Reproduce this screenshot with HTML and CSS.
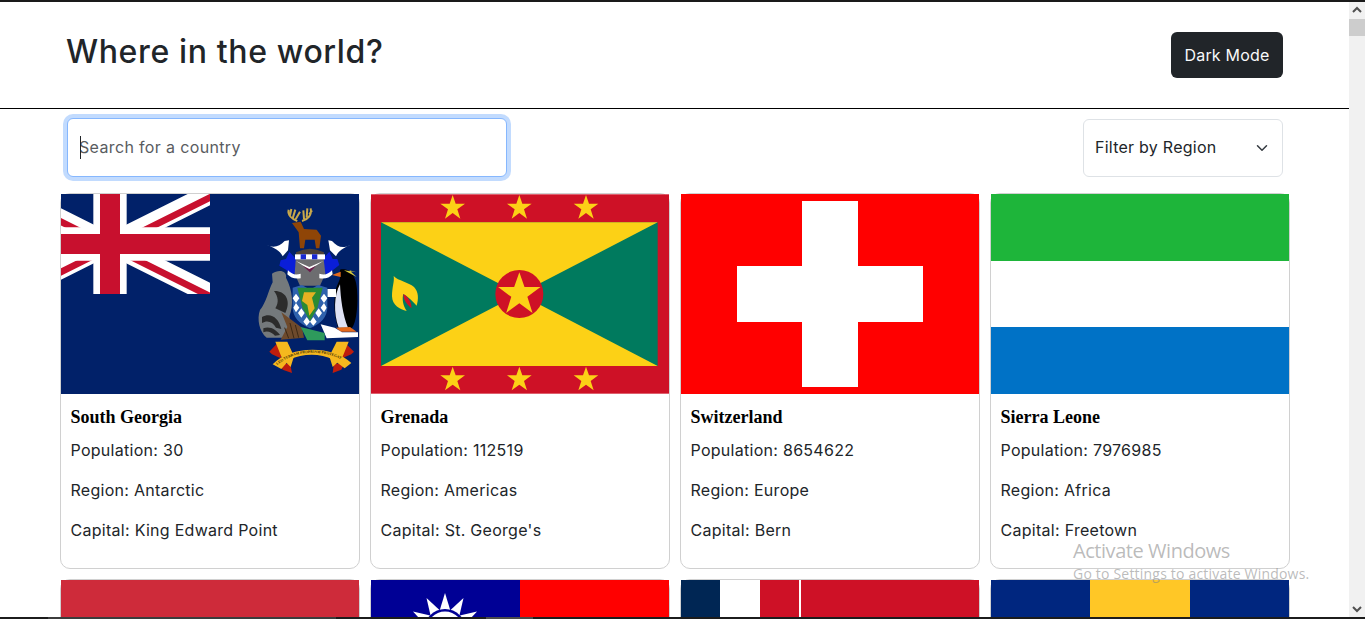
FILE: index.html
```html
<!DOCTYPE html>
<html lang="en">
<head>
    <meta charset="UTF-8">
    <meta name="viewport" content="width=device-width, initial-scale=1.0">
    <title>Where in the world?</title>
    <link rel="stylesheet" href="styles.css">
</head>
<body>
    <div class="top-edge"></div>
    <div class="window">
        <div class="page">
            <header class="header">
                <h1>Where in the world?</h1>
                <button type="button" class="mode-btn">Dark Mode</button>
            </header>

            <div class="controls">
                <div class="search">
                    <input type="text" class="search-input" placeholder="Search for a country">
                    <span class="caret"></span>
                </div>
                <div class="filter">
                    <select class="filter-select">
                        <option>Filter by Region</option>
                        <option>Africa</option>
                        <option>Americas</option>
                        <option>Asia</option>
                        <option>Europe</option>
                        <option>Oceania</option>
                    </select>
                    <svg class="chevron" viewBox="0 0 16 16" width="16" height="16"><path d="M2 5l6 6 6-6" fill="none" stroke="#343a40" stroke-width="2" stroke-linecap="round" stroke-linejoin="round" transform="translate(2 2) scale(.75)"/></svg>
                </div>
            </div>

            <div class="grid">
                <div class="card">
                    <!-- South Georgia -->
                    <svg class="flag" viewBox="0 0 298 200">
                        <defs>
                            <clipPath id="canton"><rect width="149" height="100"/></clipPath>
                        </defs>
                        <rect width="298" height="200" fill="#012169"/>
                        <g clip-path="url(#canton)">
                            <g transform="translate(-51 0) scale(3.3333)">
                                <path d="M0 0L60 30M60 0L0 30" stroke="#fff" stroke-width="6"/>
                                <path d="M0 0L30 15M60 30L30 15" stroke="#c8102e" stroke-width="2" transform="translate(0 .7)"/>
                                <path d="M60 0L30 15M0 30L30 15" stroke="#c8102e" stroke-width="2" transform="translate(.7 .7)"/>
                                <path d="M30 0V30M0 15H60" stroke="#fff" stroke-width="10"/>
                                <path d="M30 0V30M0 15H60" stroke="#c8102e" stroke-width="6"/>
                            </g>
                        </g>
                        <g transform="translate(149 1) scale(.33333)">
                            <!-- antlers and deer -->
                            <path d="M262 78C246 72 232 60 236 44M240 62L244 42M248 70L256 44M256 74L270 50M276 78C294 74 306 60 302 40M282 72L280 46M290 68L292 40M298 58L306 46" fill="none" stroke="#c9a84a" stroke-width="6"/>
                            <path d="M246 84L272 80L282 102L320 104L333 122L328 160L318 160L314 134L286 134L282 160L270 160L266 112Z" fill="#8f4507"/>
                            <path d="M258 172Q300 150 342 172V180H258Z" fill="#4e4238"/>
                            <!-- wings -->
                            <path d="M170 150C192 160 208 154 224 138L237 136L234 166L218 184C212 168 192 158 170 150Z" fill="#fff"/>
                            <path d="M422 150C398 162 382 156 366 138L355 136L360 166L378 184C384 168 402 158 422 150Z" fill="#fff"/>
                            <!-- mantling -->
                            <path d="M238 170L258 192L270 234L240 238L228 224L208 212L212 196L228 192Z" fill="#0a1ed8"/>
                            <path d="M358 170L338 192L328 234L358 238L370 224L388 210L382 192L368 192Z" fill="#0a1ed8"/>
                            <!-- helmet -->
                            <path d="M258 182H340L346 236L330 272H270L254 236Z" fill="#6d6d70"/>
                            <path d="M255 178H345V193H255Z" fill="#fff"/>
                            <path d="M272 178H288V193H272ZM306 178H322V193H306Z" fill="#1a2ad0"/>
                            <path d="M258 198L298 216L340 198L298 224Z" fill="#fff"/>
                            <path d="M278 212L298 222L318 212L300 232Z" fill="#6b1d4b"/>
                            <path d="M234 226Q250 244 272 236V250Q246 254 232 238ZM366 226Q350 244 328 236V250Q354 254 368 238Z" fill="#fff"/>
                            <!-- seal -->
                            <path d="M186 236C205 222 232 226 228 248C248 286 252 330 238 364L244 428H170C148 410 140 372 150 345C168 325 176 285 188 262Z" fill="#74797c"/>
                            <path d="M192 288C222 286 246 312 226 354L196 340C208 322 204 304 192 288ZM156 366C182 352 206 368 214 402L198 398C188 380 172 374 156 384Z" fill="#2c2c2c"/>
                            <path d="M160 400C180 392 200 405 210 420L195 422C186 412 172 406 160 412Z" fill="#2c2c2c"/>
                            <!-- rocks -->
                            <path d="M214 352L276 398L282 428L212 434L232 396Z" fill="#6e4a2c"/>
                            <path d="M224 398L236 430M240 384L252 430M256 390L266 428" stroke="#3d2814" stroke-width="3"/>
                            <!-- penguin -->
                            <path d="M390 224C418 218 442 240 442 300C444 345 436 395 422 402L384 398C372 360 370 320 378 280C385 262 392 252 390 240Z" fill="#000"/>
                            <path d="M390 268C372 300 370 355 386 398H414C398 360 392 310 390 268Z" fill="#dfe2f4"/>
                            <path d="M366 240L392 230V246Z" fill="#e46a1c"/>
                            <path d="M402 226L440 246L418 226L440 232Z" fill="#d8c93a"/>
                            <path d="M378 398L420 396L440 410H392Z" fill="#e46a1c"/>
                            <path d="M352 282H378V306H352Z" fill="#fff"/>
                            <path d="M332 388L374 398L396 412H444V426L350 430Z" fill="#fff"/>
                            <!-- shield -->
                            <path d="M248 278L276 270L300 284L324 270L352 278V340Q350 380 300 400Q250 380 248 340Z" fill="#2f62ad"/>
                            <path d="M258 296L268 310L258 324L248 310ZM258 324L268 338L258 352L250 338ZM274 340L284 354L274 368L264 354ZM342 296L352 310L342 324L332 310ZM342 324L350 338L342 352L332 338ZM326 340L336 354L326 368L316 354ZM290 366L300 380L290 392L280 380ZM310 366L320 380L310 392L300 380Z" fill="#fff"/>
                            <path d="M262 278H338L322 340L300 378L278 340Z" fill="#2a8a33"/>
                            <path d="M282 292H318L306 308L314 340L298 362L292 330L276 318Z" fill="#e5b122"/>
                            <path d="M272 396L344 414V436H292Z" fill="#2e9a5c"/>
                            <!-- motto scroll -->
                            <path d="M178 470L206 440L226 448L212 490L186 478Z" fill="#be1d0d"/>
                            <path d="M432 470L402 440L382 448L396 490L424 478Z" fill="#be1d0d"/>
                            <path d="M210 508L240 505L246 534L218 524Z" fill="#be1d0d"/>
                            <path d="M402 508L372 505L368 534L394 524Z" fill="#be1d0d"/>
                            <path d="M196 440L232 440L252 484L242 516L216 490Z M416 440L380 440L358 484L368 516L396 490Z" fill="#f5b81e"/>
                            <path d="M188 508C240 450 370 450 424 504L404 520L370 494C330 474 280 474 238 494L214 522Z" fill="#f5b81e"/>
                            <path id="motto" d="M202 510C255 462 355 462 414 506" fill="none"/>
                            <text class="motto"><textPath href="#motto">LEO TERRAM PROPRIAM PROTEGAT</textPath></text>
                        </g>
                    </svg>
                    <div class="card-body">
                        <h5>South Georgia</h5>
                        <p>Population: 30</p>
                        <p>Region: Antarctic</p>
                        <p>Capital: King Edward Point</p>
                    </div>
                </div>

                <div class="card">
                    <!-- Grenada -->
                    <svg class="flag" viewBox="3 12 894 598">
                        <defs>
                            <polygon id="gd-star" points="0,-38 9,-12 37,-12 14,5 23,33 0,16 -23,33 -14,5 -37,-12 -9,-12" fill="#fcd116"/>
                        </defs>
                        <rect x="3" y="12" width="894" height="598" fill="#ce1126"/>
                        <rect x="33" y="96" width="830" height="431" fill="#007a5e"/>
                        <path d="M33 96H863L448 311L863 527H33L448 311Z" fill="#fcd116"/>
                        <use href="#gd-star" x="248" y="52"/>
                        <use href="#gd-star" x="448" y="52"/>
                        <use href="#gd-star" x="648" y="52"/>
                        <use href="#gd-star" x="248" y="567"/>
                        <use href="#gd-star" x="448" y="567"/>
                        <use href="#gd-star" x="648" y="567"/>
                        <circle cx="448" cy="311" r="72" fill="#ce1126"/>
                        <use href="#gd-star" transform="translate(448 311) scale(1.72)"/>
                        <path d="M71 257C74 272 66 290 66 318C67 345 90 358 110 362C98 345 96 325 100 311C115 320 130 335 140 346C146 325 146 305 132 290C115 275 85 272 71 257Z" fill="#fcd116"/>
                        <path d="M100 311C116 320 126 340 124 354L112 342C104 332 100 322 100 311Z" fill="#ce1126"/>
                    </svg>
                    <div class="card-body">
                        <h5>Grenada</h5>
                        <p>Population: 112519</p>
                        <p>Region: Americas</p>
                        <p>Capital: St. George's</p>
                    </div>
                </div>

                <div class="card">
                    <!-- Switzerland -->
                    <svg class="flag" viewBox="0 0 298 200">
                        <rect width="298" height="200" fill="#f00"/>
                        <path d="M121 7H177V72H242V128H177V193H121V128H56V72H121Z" fill="#fff"/>
                    </svg>
                    <div class="card-body">
                        <h5>Switzerland</h5>
                        <p>Population: 8654622</p>
                        <p>Region: Europe</p>
                        <p>Capital: Bern</p>
                    </div>
                </div>

                <div class="card">
                    <!-- Sierra Leone -->
                    <svg class="flag" viewBox="0 0 298 200">
                        <rect width="298" height="67" fill="#1eb53a"/>
                        <rect y="67" width="298" height="66" fill="#fff"/>
                        <rect y="133" width="298" height="67" fill="#0072c6"/>
                    </svg>
                    <div class="card-body">
                        <h5>Sierra Leone</h5>
                        <p>Population: 7976985</p>
                        <p>Region: Africa</p>
                        <p>Capital: Freetown</p>
                    </div>
                </div>

                <div class="card">
                    <svg class="flag" viewBox="0 0 298 200">
                        <rect width="298" height="200" fill="#ce2b3a"/>
                    </svg>
                </div>

                <div class="card">
                    <!-- Taiwan -->
                    <svg class="flag" viewBox="0 0 298 200">
                        <defs>
                            <polygon id="sun-ray" points="74,13 68.5,31 79.5,31" fill="#fff"/>
                        </defs>
                        <rect width="298" height="200" fill="#f00"/>
                        <rect width="149" height="100" fill="#000095"/>
                        <use href="#sun-ray"/>
                        <use href="#sun-ray" transform="rotate(30 74 50)"/>
                        <use href="#sun-ray" transform="rotate(-30 74 50)"/>
                        <use href="#sun-ray" transform="rotate(60 74 50)"/>
                        <use href="#sun-ray" transform="rotate(-60 74 50)"/>
                        <circle cx="74" cy="50" r="21" fill="#000095"/>
                        <circle cx="74" cy="50" r="18.5" fill="#fff"/>
                    </svg>
                </div>

                <div class="card">
                    <!-- Wallis and Futuna -->
                    <svg class="flag" viewBox="0 0 298 200">
                        <rect width="298" height="200" fill="#ce1126"/>
                        <rect width="39" height="100" fill="#002654"/>
                        <rect x="39" width="40" height="100" fill="#fff"/>
                        <rect x="118" width="2" height="100" fill="#fff"/>
                    </svg>
                </div>

                <div class="card">
                    <!-- Barbados -->
                    <svg class="flag" viewBox="0 0 298 200">
                        <rect width="298" height="200" fill="#00267f"/>
                        <rect x="99" width="100" height="200" fill="#ffc726"/>
                    </svg>
                </div>
            </div>
        </div>

        <div class="scrollbar">
            <svg class="scroll-arrow" viewBox="0 0 16 16" width="16" height="16"><path d="M4 10l4-4 4 4" fill="none" stroke="#505050" stroke-width="2"/></svg>
            <div class="scroll-thumb"></div>
            <svg class="scroll-arrow down" viewBox="0 0 16 16" width="16" height="16"><path d="M4 6l4 4 4-4" fill="none" stroke="#505050" stroke-width="2"/></svg>
        </div>
    </div>
    <div class="taskbar">
        <span class="task-a"></span>
        <span class="task-b"></span>
    </div>

    <div class="watermark">
        <div class="watermark-title">Activate Windows</div>
        <div class="watermark-sub">Go to Settings to activate Windows.</div>
    </div>
</body>
</html>
```

FILE: styles.css
```css
* { box-sizing: border-box; }
html, body { height: 100%; }
body { margin: 0; height: 619px; overflow: hidden; position: relative; background: #fff; color: #212529; font-family: Inter, "Noto Sans", sans-serif; font-size: 16px; line-height: 24px; }

.top-edge { height: 2px; background: #1a1a1a; }
.window { display: flex; height: 615px; }
.page { flex: 1; min-width: 0; overflow: hidden; }

.header { display: flex; justify-content: space-between; align-items: flex-start; height: 107px; padding: 30px 66px 0 67px; border-bottom: 1px solid #000; }
.header h1 { margin: 0 0 0 -1px; font-size: 32px; line-height: 40px; font-weight: 500; letter-spacing: .63px; }
.mode-btn { width: 112px; height: 46px; background: #212529; color: #f8f9fa; border: none; border-radius: 6px; font: inherit; font-size: 16px; letter-spacing: .2px; }

.controls { display: flex; justify-content: space-between; align-items: flex-end; padding: 9px 66px 0 67px; }
.search { position: relative; }
.search-input { display: block; width: 440px; height: 59px; padding: 0 12px 2px; border: 1px solid #86b7fe; border-radius: 6px; box-shadow: 0 0 0 4px rgba(13,110,253,.25); font: inherit; letter-spacing: .35px; text-indent: -1px; outline: none; }
.search-input::placeholder { color: #595c5f; opacity: 1; }
.caret { position: absolute; left: 13px; top: 18px; width: 1px; height: 23px; background: #212529; }

.filter { position: relative; }
.filter-select { display: block; width: 200px; height: 58px; padding: 0 36px 2px 11px; border: 1px solid #dee2e6; border-radius: 6px; background: #fff; color: #212529; font: inherit; letter-spacing: .25px; appearance: none; }
.chevron { position: absolute; right: 13px; top: 21px; pointer-events: none; }

.grid { display: grid; grid-template-columns: repeat(4, 300px); gap: 10px; padding: 16px 0 0 60px; }
.card { border: 1px solid #d0d0d0; border-radius: 10px; background: #fff; }
.flag { display: block; width: 298px; height: 200px; }
.card-body { padding: 10px; }
.card-body h5 { margin: 0 0 8px -.5px; font-family: "Liberation Serif", serif; font-size: 18px; line-height: 26px; font-weight: 700; color: #000; }
.card-body p { margin: 0 0 16px -.5px; letter-spacing: .28px; }
.motto { font-family: "Liberation Serif", serif; font-size: 11px; font-weight: 700; fill: #3a2a00; }

.scrollbar { width: 16px; display: flex; flex-direction: column; background: #f1f1f1; }
.scroll-arrow { display: block; flex: none; }
.scroll-arrow.down { margin-top: auto; }
.scroll-thumb { height: 17px; margin-top: 1px; background: #cdcdcd; }

.taskbar { display: flex; height: 2px; background: #1c1c1c; padding-left: 48px; }
.task-a { width: 288px; background: #3c3c3c; }
.task-b { width: 47px; margin-left: 150px; background: #4a4a4a; }

.watermark { position: absolute; left: 1073px; top: 537px; color: rgba(130,130,130,.55); font-family: "Open Sans", sans-serif; pointer-events: none; }
.watermark-title { font-size: 20px; line-height: 27px; letter-spacing: -.45px; }
.watermark-sub { font-size: 14px; line-height: 19px; letter-spacing: .2px; }
```
